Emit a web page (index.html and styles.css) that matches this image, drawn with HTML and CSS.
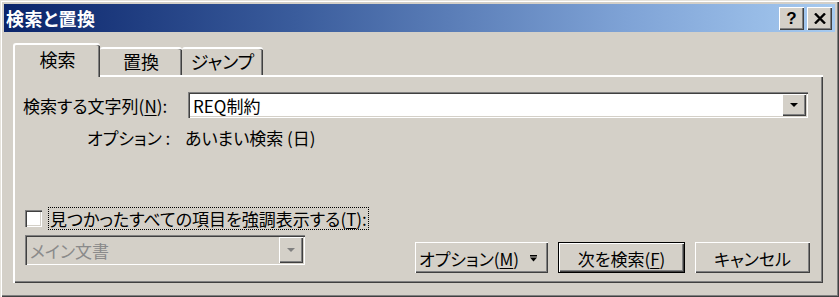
FILE: index.html
```html
<!DOCTYPE html>
<html lang="ja">
<head>
<meta charset="utf-8">
<title>検索と置換</title>
<link rel="stylesheet" href="styles.css">
</head>
<body>
<div class="window">
  <div class="titlebar">
    <span class="title">検索と置換</span>
    <div class="tb-buttons">
      <div class="tb-btn help">?</div>
      <div class="tb-btn close">
        <svg width="12" height="11" viewBox="0 0 12 11"><path d="M1 0.5 L11 10.5 M11 0.5 L1 10.5" stroke="#000" stroke-width="2.4" fill="none"/></svg>
      </div>
    </div>
  </div>
  <div class="content">
    <div class="tabs">
      <div class="tab active">検索</div>
      <div class="tab t2">置換</div>
      <div class="tab t3">ジャンプ</div>
    </div>
    <div class="panel">
      <div class="find-row">
        <span class="find-label">検索する文字列(<u>N</u>):</span>
        <div class="combo">
          <span class="combo-text">REQ制約</span>
          <span class="drop"><svg width="8" height="4" viewBox="0 0 8 4"><path d="M0 0H8L4 4Z" fill="#000"/></svg></span>
        </div>
      </div>
      <div class="options-row">
        <span class="opt-label">オプション :</span>
        <span class="opt-value">あいまい検索 (日)</span>
      </div>
      <div class="lower">
        <div class="lower-left">
          <div class="check-row">
            <span class="checkbox"></span>
            <span class="check-label">見つかったすべての項目を強調表示する(<u>T</u>):</span>
          </div>
          <div class="combo disabled">
            <span class="combo-text">メイン文書</span>
            <span class="drop"><svg width="8" height="4" viewBox="0 0 8 4"><path d="M0 0H8L4 4Z" fill="#808080"/></svg></span>
          </div>
        </div>
        <div class="buttons">
          <div class="btn opt-btn"><span>オプション(<u>M</u>)</span><svg width="7" height="7" viewBox="0 0 7 7"><path d="M0 0H7V1.4H0Z M0 2.6H7L3.5 6.6Z" fill="#000"/></svg></div>
          <div class="btn default w2">次を検索(<u>F</u>)</div>
          <div class="btn w3">キャンセル</div>
        </div>
      </div>
    </div>
  </div>
</div>
</body>
</html>
```

FILE: styles.css
```css
* { box-sizing: border-box; }
html, body { margin: 0; padding: 0; }
body {
  background: #d4d0c8;
  font-family: "Noto Sans CJK JP", "Noto Sans", sans-serif;
  font-size: 17px;
  color: #000;
  font-feature-settings: "palt";
  line-height: 1;
}
u { text-decoration: underline; text-underline-offset: 2px; }

.window {
  width: 839px;
  height: 297px;
  padding: 4px;
  background: #d4d0c8;
  box-shadow: inset 1px 1px #e6e3dc, inset 2px 2px #fff, inset -1px -1px #404040, inset -2px -2px #808080;
  display: flex;
  flex-direction: column;
}

.titlebar {
  height: 28px;
  flex: none;
  background: linear-gradient(to right, #0a246a 0%, #3a5c9c 35%, #7fa3d6 75%, #a6caf0 100%);
  display: flex;
  align-items: center;
  justify-content: space-between;
  padding: 0 3px 0 2px;
}
.title { color: #fff; font-weight: bold; font-size: 18px; letter-spacing: 0.5px; }
.tb-buttons { display: flex; gap: 3px; }
.tb-btn {
  width: 25px;
  height: 23px;
  background: #d4d0c8;
  box-shadow: inset 1px 1px #fff, inset -1px -1px #404040, inset -2px -2px #808080;
  display: flex;
  align-items: center;
  justify-content: center;
}
.help { font-family: "Liberation Sans", sans-serif; font-weight: bold; font-size: 17px; padding-top: 1px; }

.content {
  flex: 1;
  display: flex;
  flex-direction: column;
  padding: 11px 12px 10px 9px;
}

.tabs {
  display: flex;
  align-items: flex-end;
  height: 32px;
  flex: none;
  position: relative;
  z-index: 1;
}
.tab {
  height: 28px;
  display: flex;
  align-items: center;
  justify-content: center;
  font-size: 18px;
  border-top: 2px solid #fff;
  border-left: 2px solid #fff;
  box-shadow: inset -1px 0 #404040, inset -2px 0 #808080;
  border-radius: 3px 3px 0 0;
  background: #d4d0c8;
  padding-bottom: 2px;
}
.tab.active { width: 87px; height: 34px; margin-bottom: -2px; padding-bottom: 4px; }
.tab.t2 { width: 82px; border-left: none; }
.tab.t3 { width: 81px; border-left: none; }

.panel {
  flex: 1;
  display: flex;
  flex-direction: column;
  padding: 17px 15px 10px 10px;
  box-shadow: inset 2px 2px #fff, inset -1px -1px #404040, inset -2px -2px #808080;
}

.find-row { display: flex; align-items: center; height: 26px; }
.find-label { width: 165px; flex: none; }

.combo {
  flex: 1;
  height: 26px;
  display: flex;
  align-items: center;
  justify-content: space-between;
  background: #fff;
  box-shadow: inset 1px 1px #808080, inset 2px 2px #404040, inset -1px -1px #fff, inset -2px -2px #d4d0c8;
  padding: 2px 2px 2px 5px;
}
.combo-text { padding-top: 1px; }
.drop {
  width: 24px;
  height: 22px;
  background: #d4d0c8;
  box-shadow: inset 1px 1px #fff, inset -1px -1px #404040, inset -2px -2px #808080;
  display: flex;
  align-items: center;
  justify-content: center;
}

.options-row { display: flex; margin-top: 8px; height: 22px; align-items: center; padding-left: 64px; }
.opt-label { width: 98px; }

.lower {
  margin-top: auto;
  display: flex;
  align-items: flex-end;
  justify-content: space-between;
}
.lower-left { display: flex; flex-direction: column; gap: 5px; margin-bottom: 8px; padding-left: 2px; }
.check-row { display: flex; align-items: center; height: 23px; gap: 6px; }
.checkbox {
  width: 17px;
  height: 17px;
  background: #fff;
  box-shadow: inset 1px 1px #808080, inset 2px 2px #404040, inset -1px -1px #fff, inset -2px -2px #d4d0c8;
}
.check-label {
  height: 23px;
  display: flex;
  align-items: center;
  padding: 0 2px;
  outline: 1px dotted #000;
  outline-offset: -1px;
}
.combo.disabled { flex: none; width: 280px; height: 30px; background: #d4d0c8; color: #8a8a8a; }
.combo.disabled .drop { height: 26px; }

.buttons { display: flex; gap: 10px; margin-right: -2px; }
.btn {
  height: 31px;
  display: flex;
  align-items: center;
  justify-content: center;
  background: #d4d0c8;
  box-shadow: inset 1px 1px #fff, inset -1px -1px #404040, inset -2px -2px #808080;
  padding-top: 1px;
}
.opt-btn { width: 133px; justify-content: space-between; padding: 1px 11px 0 4px; }
.w2 { width: 127px; }
.w3 { width: 115px; }
.btn.default {
  box-shadow: inset 0 0 0 1px #000, inset 2px 2px #fff, inset -2px -2px #404040, inset -3px -3px #808080;
}
```
